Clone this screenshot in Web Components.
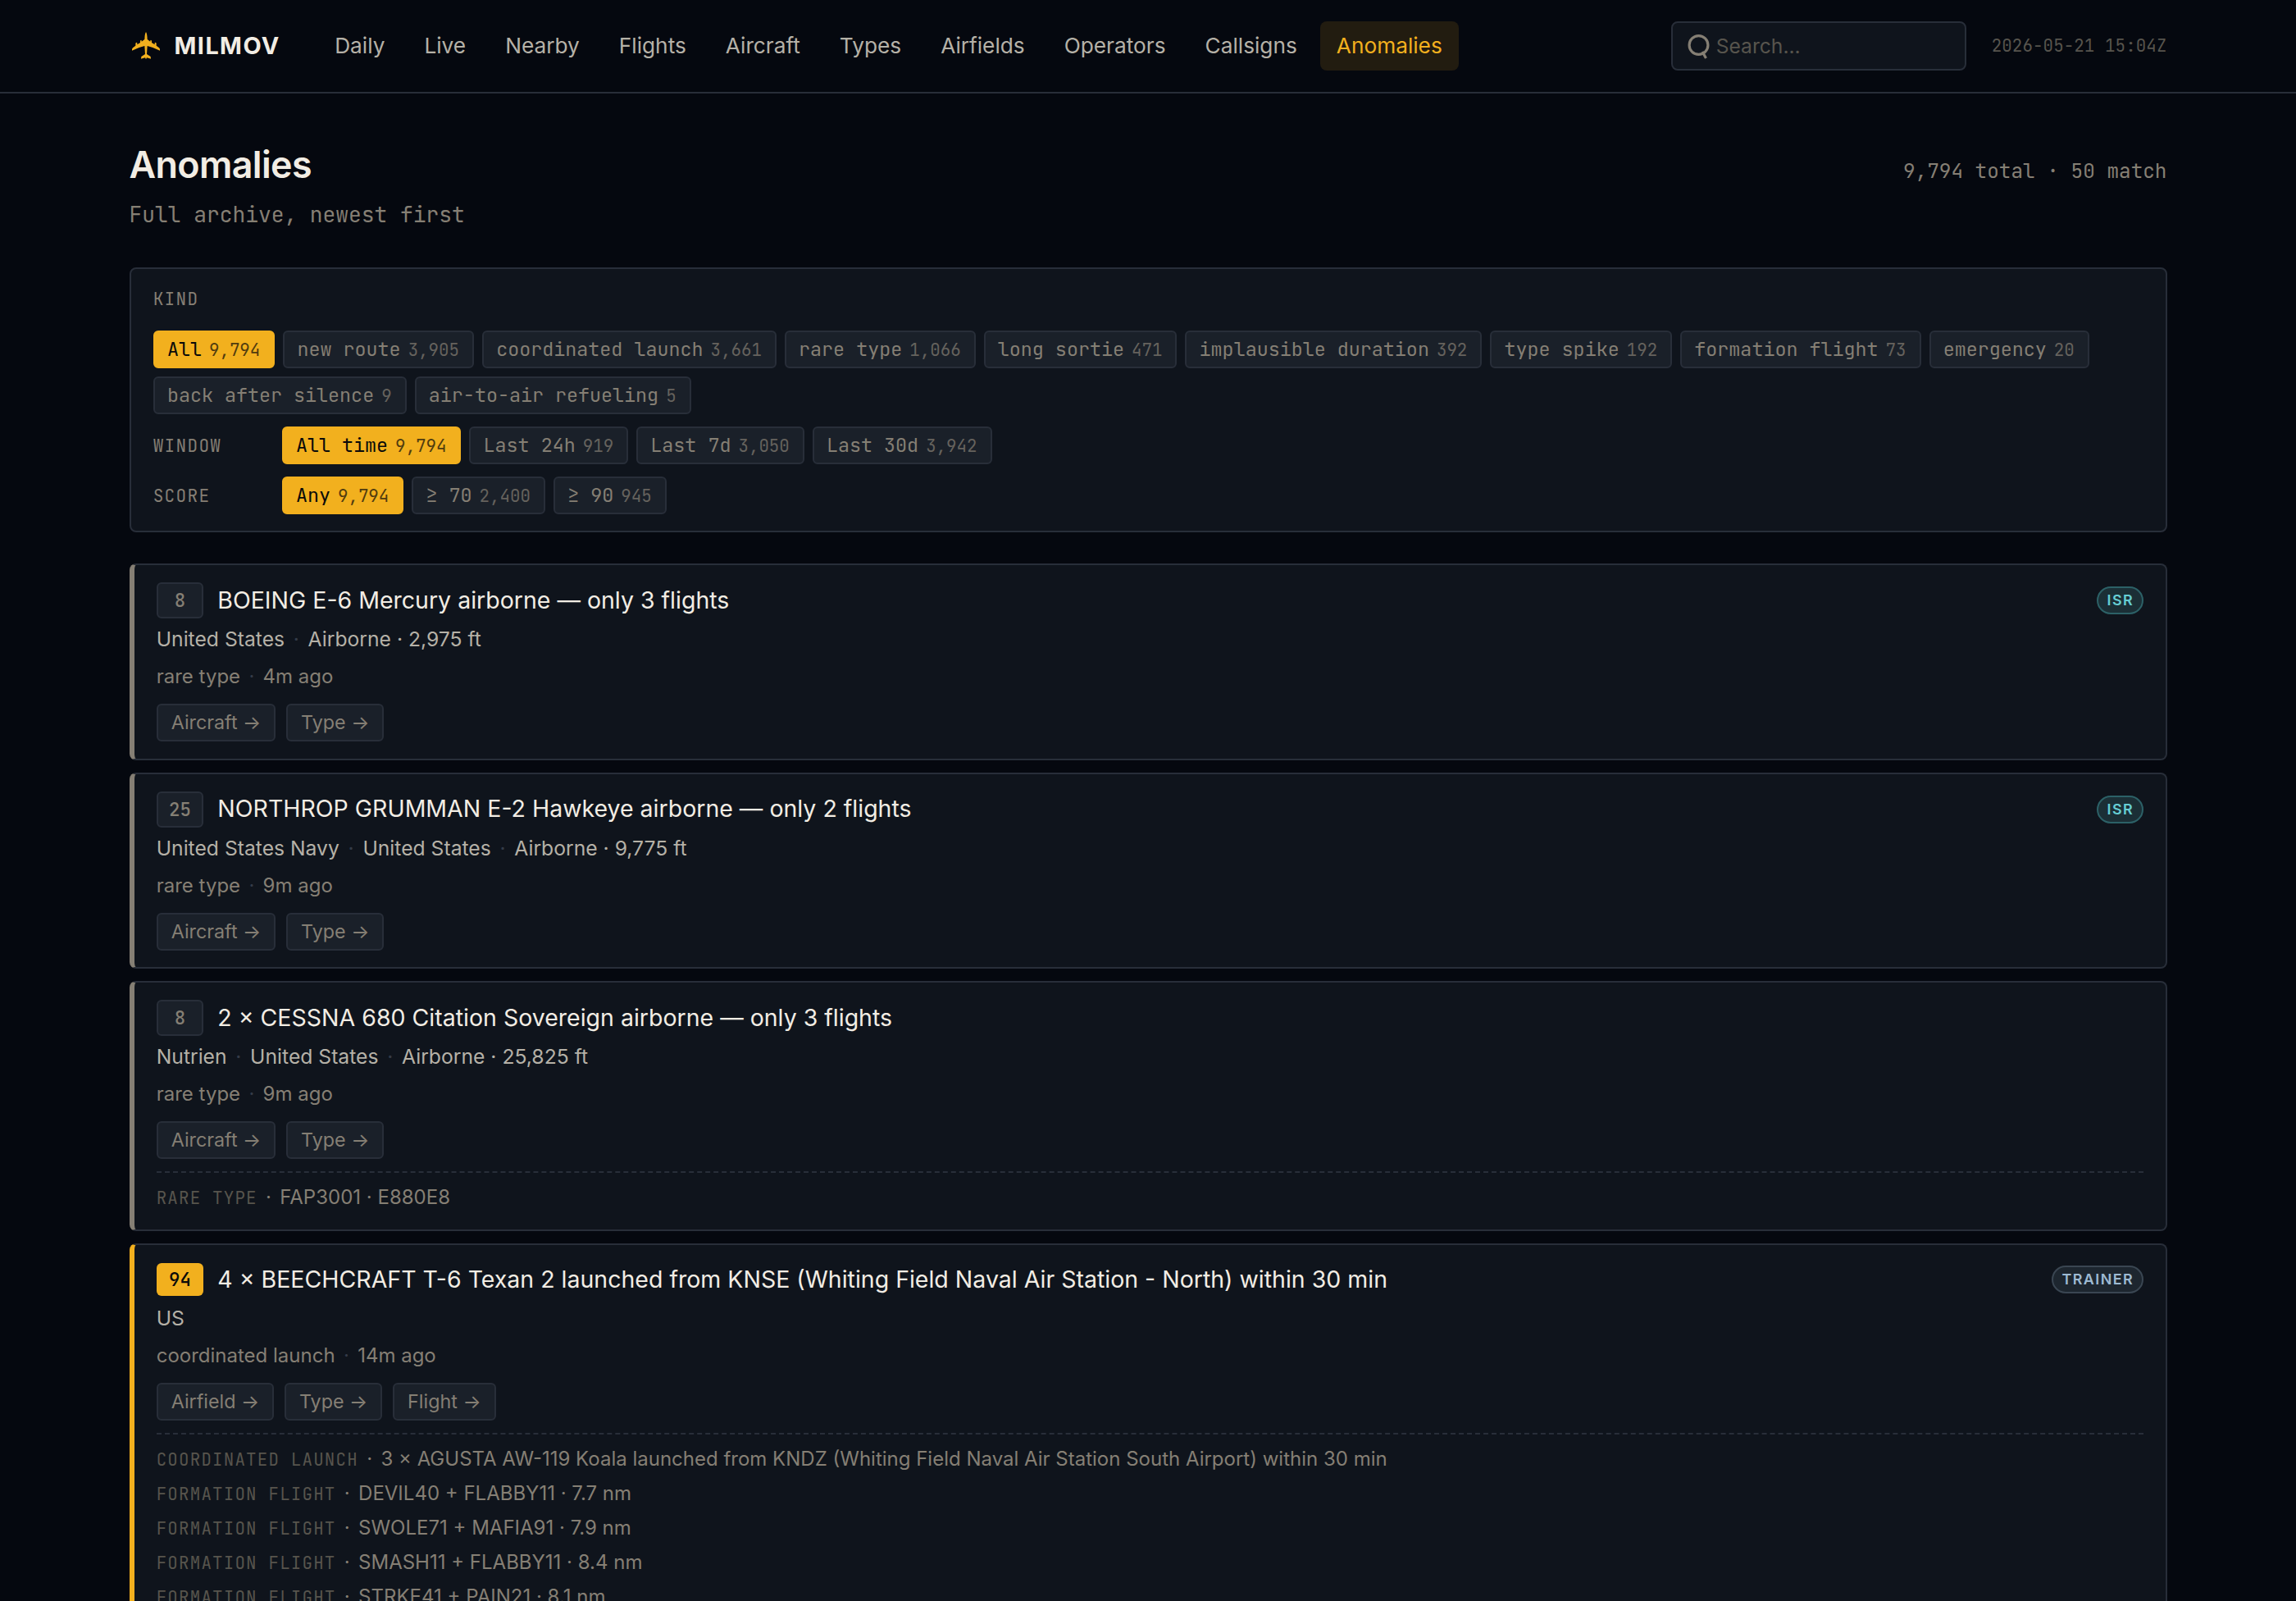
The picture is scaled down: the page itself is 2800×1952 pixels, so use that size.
<!DOCTYPE html>
<html lang="en">
<head>
<meta charset="utf-8">
<title>Anomalies - MILMOV</title>
<style>
  :root {
    --bg: #05080f;
    --panel: #0f141c;
    --chip: #1a2029;
    --line: #282e39;
    --text: #f2ede4;
    --text-2: #b5b1a7;
    --muted: #857f74;
    --faint: #57544d;
    --amber: #f2b01e;
    --mono: "JetBrains Mono", "DejaVu Sans Mono", monospace;
  }
  html, body { margin: 0; height: 1952px; overflow: hidden; }
  body {
    background: var(--bg);
    color: var(--text);
    font-family: Inter, "Liberation Sans", sans-serif;
    font-size: 26px;
  }
</style>
</head>
<body>

<mm-header>
  <mm-link>Daily</mm-link>
  <mm-link>Live</mm-link>
  <mm-link>Nearby</mm-link>
  <mm-link>Flights</mm-link>
  <mm-link>Aircraft</mm-link>
  <mm-link>Types</mm-link>
  <mm-link>Airfields</mm-link>
  <mm-link>Operators</mm-link>
  <mm-link>Callsigns</mm-link>
  <mm-link active>Anomalies</mm-link>
  <mm-search slot="tools">Search...</mm-search>
  <span slot="clock">2026-05-21 15:04Z</span>
</mm-header>

<mm-page>
  <mm-title>
    Anomalies
    <span slot="sub">Full archive, newest first</span>
    <span slot="count">9,794 total · 50 match</span>
  </mm-title>

  <mm-filters>
    <mm-filter-row label="Kind" stacked>
      <mm-chip active count="9,794">All</mm-chip>
      <mm-chip count="3,905">new route</mm-chip>
      <mm-chip count="3,661">coordinated launch</mm-chip>
      <mm-chip count="1,066">rare type</mm-chip>
      <mm-chip count="471">long sortie</mm-chip>
      <mm-chip count="392">implausible duration</mm-chip>
      <mm-chip count="192">type spike</mm-chip>
      <mm-chip count="73">formation flight</mm-chip>
      <mm-chip count="20">emergency</mm-chip>
      <mm-chip count="9">back after silence</mm-chip>
      <mm-chip count="5">air-to-air refueling</mm-chip>
    </mm-filter-row>
    <mm-filter-row label="Window">
      <mm-chip active count="9,794">All time</mm-chip>
      <mm-chip count="919">Last 24h</mm-chip>
      <mm-chip count="3,050">Last 7d</mm-chip>
      <mm-chip count="3,942">Last 30d</mm-chip>
    </mm-filter-row>
    <mm-filter-row label="Score">
      <mm-chip active count="9,794">Any</mm-chip>
      <mm-chip count="2,400">≥ 70</mm-chip>
      <mm-chip count="945">≥ 90</mm-chip>
    </mm-filter-row>
  </mm-filters>

  <mm-card score="8" where="United States|Airborne · 2,975 ft" meta="rare type|4m ago">
    BOEING E-6 Mercury airborne — only 3 flights
    <mm-tag slot="tag" kind="isr">ISR</mm-tag>
    <mm-button slot="links">Aircraft →</mm-button>
    <mm-button slot="links">Type →</mm-button>
  </mm-card>

  <mm-card score="25" where="United States Navy|United States|Airborne · 9,775 ft" meta="rare type|9m ago">
    NORTHROP GRUMMAN E-2 Hawkeye airborne — only 2 flights
    <mm-tag slot="tag" kind="isr">ISR</mm-tag>
    <mm-button slot="links">Aircraft →</mm-button>
    <mm-button slot="links">Type →</mm-button>
  </mm-card>

  <mm-card score="8" where="Nutrien|United States|Airborne · 25,825 ft" meta="rare type|9m ago">
    2 × CESSNA 680 Citation Sovereign airborne — only 3 flights
    <mm-button slot="links">Aircraft →</mm-button>
    <mm-button slot="links">Type →</mm-button>
    <mm-related slot="related" kind="Rare type">FAP3001 · E880E8</mm-related>
  </mm-card>

  <mm-card score="94" hot where="US" meta="coordinated launch|14m ago">
    4 × BEECHCRAFT T-6 Texan 2 launched from KNSE (Whiting Field Naval Air Station - North) within 30 min
    <mm-tag slot="tag">TRAINER</mm-tag>
    <mm-button slot="links">Airfield →</mm-button>
    <mm-button slot="links">Type →</mm-button>
    <mm-button slot="links">Flight →</mm-button>
    <mm-related slot="related" kind="Coordinated launch">3 × AGUSTA AW-119 Koala launched from KNDZ (Whiting Field Naval Air Station South Airport) within 30 min</mm-related>
    <mm-related slot="related" kind="Formation flight">DEVIL40 + FLABBY11 · 7.7 nm</mm-related>
    <mm-related slot="related" kind="Formation flight">SWOLE71 + MAFIA91 · 7.9 nm</mm-related>
    <mm-related slot="related" kind="Formation flight">SMASH11 + FLABBY11 · 8.4 nm</mm-related>
    <mm-related slot="related" kind="Formation flight">STRKE41 + PAIN21 · 8.1 nm</mm-related>
  </mm-card>
</mm-page>

<script>
(function () {
  // registers an element whose shadow root is a clone of the markup
  function define(name, html, setup) {
    let tmpl = document.createElement('template');
    tmpl.innerHTML = html;
    customElements.define(name, class extends HTMLElement {
      constructor() {
        super();
        this.attachShadow({mode: 'open'});
        this.shadowRoot.appendChild(tmpl.content.cloneNode(true));
      }
      connectedCallback() {
        if (setup) setup(this, this.shadowRoot);
      }
    });
  }

  // "a|b|c" -> spans with a dim dot between them
  function fillParts(box, value) {
    box.textContent = '';
    value.split('|').forEach((part, i) => {
      if (i) {
        let dot = document.createElement('i');
        dot.textContent = '·';
        box.appendChild(dot);
      }
      let span = document.createElement('span');
      span.textContent = part;
      box.appendChild(span);
    });
  }

  define('mm-header', `
    <style>
      :host {
        display: flex;
        align-items: center;
        box-sizing: border-box;
        height: 114px;
        padding: 0 157.5px;
        border-bottom: 2px solid var(--line);
      }
      .brand { display: flex; align-items: center; gap: 17.6px; margin-right: 46.2px; padding-left: 3.5px; }
      .brand svg { width: 34px; height: 34px; display: block; }
      b { font-size: 28.8px; font-weight: 700; letter-spacing: 1.44px; line-height: 40px; }
      nav { display: flex; gap: 7.6px; }
      .tools { display: flex; align-items: center; gap: 31px; margin-left: auto; }
      .clock { font: 20.8px/32px var(--mono); letter-spacing: 0.1px; color: var(--faint); }
    </style>
    <div class="brand">
      <svg viewBox="34 57 102 102" fill="#f2b01e">
        <path d="M85 57 C88 61 89 68 89.500 76 L90 84 L101 92 L101 88 L103 86 L106 89 L106 96 L117 103 L117 97 L120 95 L123 98 L123 107 L133 115 L136 119 V125 L110 114 L90 108 L88 138 L102 147 L103 155 L88 151 L85 157 L82 151 L67 155 L68 147 L82 138 L80 108 L60 114 L34 125 V119 L37 115 L47 107 V98 L50 95 L53 97 V103 L64 96 V89 L67 86 L69 88 V92 L80 84 L80.500 76 C81 68 82 61 85 57 Z"/>
      </svg>
      <b>MILMOV</b>
    </div>
    <nav><slot></slot></nav>
    <div class="tools">
      <slot name="tools"></slot>
      <div class="clock"><slot name="clock"></slot></div>
    </div>
  `);

  define('mm-link', `
    <style>
      :host {
        display: block;
        padding: 0 20.2px;
        border-radius: 8px;
        font-size: 26.26px;
        line-height: 60px;
        color: var(--text-2);
      }
      :host([active]) { color: var(--amber); background: #221c10; }
    </style>
    <slot></slot>
  `);

  define('mm-search', `
    <style>
      :host {
        display: flex;
        align-items: center;
        box-sizing: border-box;
        width: 360px;
        height: 60px;
        padding-left: 17px;
        gap: 6px;
        border: 2px solid var(--line);
        border-radius: 8px;
        background: var(--panel);
        color: var(--faint);
        font-size: 24.64px;
      }
      svg { width: 30px; height: 34px; }
    </style>
    <svg viewBox="0 0 30 34" fill="none" stroke="#857f74" stroke-width="3.200">
      <circle cx="14.500" cy="16" r="11.400"/>
      <path d="M19 24 L23.500 32"/>
    </svg>
    <slot></slot>
  `);

  define('mm-page', `
    <style>
      :host { display: flex; flex-direction: column; padding: 60px 157.5px 0; gap: 15px; }
    </style>
    <slot></slot>
  `);

  define('mm-title', `
    <style>
      :host {
        display: grid;
        grid-template-columns: 1fr auto;
        grid-template-rows: 54px 40px;
        row-gap: 16px;
        align-items: baseline;
        height: 137px;
      }
      h1 { margin: 0; font-size: 44.8px; font-weight: 600; line-height: 54px; letter-spacing: -0.6px; }
      .count { font: 24.32px/36px var(--mono); letter-spacing: 0.03px; color: var(--muted); }
      .sub { font: 26.24px/40px var(--mono); color: var(--muted); margin-top: -2px; }
    </style>
    <h1><slot></slot></h1>
    <div class="count"><slot name="count"></slot></div>
    <div class="sub"><slot name="sub"></slot></div>
  `);

  define('mm-filters', `
    <style>
      :host {
        display: flex;
        flex-direction: column;
        gap: 15px;
        box-sizing: border-box;
        height: 323px;
        padding: 20px 27.2px;
        margin-bottom: 23px;
        border: 2px solid var(--line);
        border-radius: 8px;
        background: var(--panel);
      }
    </style>
    <slot></slot>
  `);

  define('mm-filter-row', `
    <style>
      :host { display: flex; align-items: center; }
      :host([stacked]) { flex-direction: column; align-items: flex-start; gap: 23px; }
      label {
        width: 157px;
        flex: none;
        font: 21.12px/32px var(--mono);
        letter-spacing: 1.27px;
        text-transform: uppercase;
        color: var(--muted);
      }
      div { display: flex; flex-wrap: wrap; gap: 10px; }
    </style>
    <label></label>
    <div><slot></slot></div>
  `, (el, root) => {
    root.querySelector('label').textContent = el.getAttribute('label');
  });

  define('mm-chip', `
    <style>
      :host {
        display: flex;
        align-items: baseline;
        gap: 9px;
        box-sizing: border-box;
        height: 46px;
        padding: 0 16px 0 15.2px;
        border: 2px solid var(--line);
        border-radius: 6px;
        background: var(--chip);
        color: var(--muted);
        font: 23.36px/41px var(--mono);
        white-space: nowrap;
      }
      small { font-size: 20.8px; opacity: 0.7; }
      :host([active]) { background: var(--amber); border-color: var(--amber); color: #0a0a0a; }
    </style>
    <span><slot></slot></span><small></small>
  `, (el, root) => {
    root.querySelector('small').textContent = el.getAttribute('count');
  });

  define('mm-tag', `
    <style>
      :host {
        display: block;
        box-sizing: border-box;
        height: 34px;
        padding: 0 9.8px 0 10.6px;
        border: 2px solid #3a4652;
        border-radius: 17px;
        background: #1d262f;
        color: #9dbad2;
        font-size: 17.92px;
        font-weight: 600;
        line-height: 30px;
        letter-spacing: 1.43px;
      }
      :host([kind="isr"]) { border-color: #2c6167; background: #1b2f36; color: #66cdd3; }
    </style>
    <slot></slot>
  `);

  define('mm-button', `
    <style>
      :host {
        display: block;
        box-sizing: border-box;
        height: 46px;
        padding: 0 16px;
        border: 2px solid var(--line);
        border-radius: 6px;
        background: var(--chip);
        color: var(--muted);
        font-size: 23.3px;
        line-height: 42px;
      }
    </style>
    <slot></slot>
  `);

  define('mm-related', `
    <style>
      :host { display: block; font-size: 24px; line-height: 42px; height: 42px; color: var(--muted); white-space: nowrap; }
      span { font-family: var(--mono); font-size: 20.8px; letter-spacing: 1.2px; color: var(--faint); text-transform: uppercase; }
      i { font-style: normal; margin: 0 10.3px; }
    </style>
    <span></span><i>·</i><slot></slot>
  `, (el, root) => {
    root.querySelector('span').textContent = el.getAttribute('kind');
  });

  define('mm-card', `
    <style>
      :host {
        display: flex;
        flex-direction: column;
        padding: 21px 26.6px 20.6px 27.2px;
        border: 2px solid var(--line);
        border-left: 6px solid var(--muted);
        border-radius: 8px;
        background: var(--panel);
      }
      :host([hot]) { border-left-color: var(--amber); }
      .head { display: flex; align-items: center; height: 44px; }
      :host([hot]) .head { height: 42.4px; }
      .score {
        box-sizing: border-box;
        width: 57.6px;
        height: 44px;
        border: 2px solid var(--line);
        border-radius: 6px;
        background: var(--chip);
        color: var(--muted);
        font: 500 22.4px/40px var(--mono);
        text-align: center;
      }
      :host([hot]) .score { height: 40px; border: 0; background: var(--amber); color: #0a0a0a; }
      h2 { margin: 0 auto 0 17px; padding-bottom: 1px; font-size: 28.5px; font-weight: 400; line-height: 42px; }
      .where, .meta { display: flex; gap: 10.3px; }
      .where { gap: 10.7px; font-size: 24.7px; line-height: 40px; margin-top: 5px; color: var(--text-2); }
      .meta { font-size: 24px; line-height: 38px; margin-top: 7px; color: var(--muted); }
      i { font-style: normal; color: #343b48; }
      .links { display: flex; gap: 12.8px; margin-top: 14px; }
      .related { margin: 15px 0 -2.6px; padding-top: 9px; border-top: 2px dashed var(--line); }
      .related[hidden] { display: none; }
    </style>
    <div class="head">
      <div class="score"></div>
      <h2><slot></slot></h2>
      <slot name="tag"></slot>
    </div>
    <div class="where"></div>
    <div class="meta"></div>
    <div class="links"><slot name="links"></slot></div>
    <div class="related"><slot name="related"></slot></div>
  `, (el, root) => {
    root.querySelector('.score').textContent = el.getAttribute('score');
    fillParts(root.querySelector('.where'), el.getAttribute('where'));
    fillParts(root.querySelector('.meta'), el.getAttribute('meta'));
    root.querySelector('.related').hidden = !el.querySelector('[slot="related"]');
  });
})();
</script>
</body>
</html>
